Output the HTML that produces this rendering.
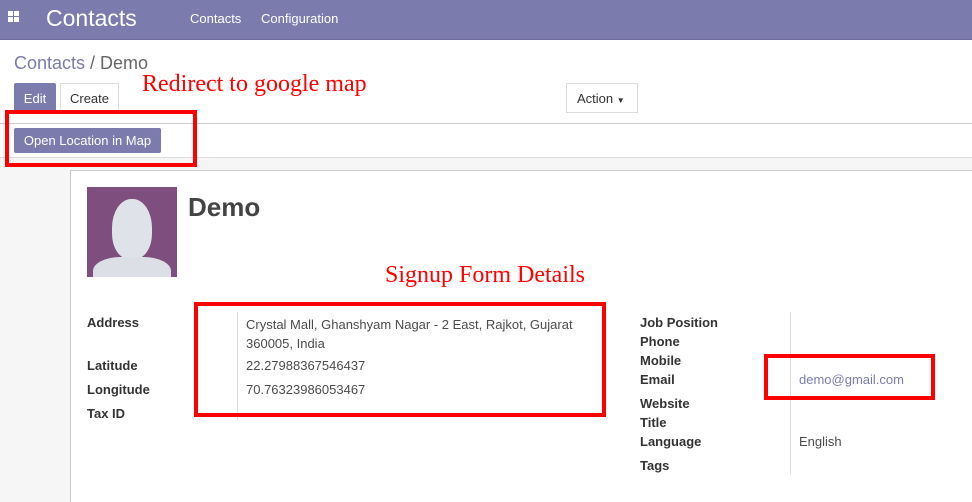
<!DOCTYPE html>
<html><head><style>
*{margin:0;padding:0;box-sizing:border-box}
body{width:972px;height:502px;overflow:hidden;background:#fff;font-family:"Liberation Sans",sans-serif;position:relative;color:#4c4c4c}
.a{position:absolute}
.nav{left:0;top:0;width:972px;height:40px;background:#7c7bad;border-bottom:1px solid #6c6b9a}
.lbl{font-size:13px;font-weight:bold;color:#333}
.val{font-size:13px;color:#4c4c4c}
.red{border:4px solid #f00}
.ann{font-family:"Liberation Serif",serif;color:#f00;font-size:24px}
</style></head><body>
<div class="a nav"></div>
<div class="a" style="left:8px;top:11px;width:12px;height:12px">
<div class="a" style="left:0;top:0;width:5px;height:5px;background:#fff"></div>
<div class="a" style="left:6px;top:0;width:5px;height:5px;background:#fff"></div>
<div class="a" style="left:0;top:6px;width:5px;height:5px;background:#fff"></div>
<div class="a" style="left:6px;top:6px;width:5px;height:5px;background:#fff"></div></div>
<div class="a" style="left:46px;top:5px;font-size:23px;color:#fff">Contacts</div>
<div class="a" style="left:190px;top:11px;font-size:13px;color:#fff">Contacts</div>
<div class="a" style="left:261px;top:11px;font-size:13px;color:#fff">Configuration</div>
<div class="a" style="left:14px;top:53px;font-size:18px;color:#7c7bad">Contacts <span style="color:#666">/ Demo</span></div>
<div class="a" style="left:14px;top:83px;width:42px;height:30px;background:#7c7bad;color:#fff;font-size:13px;text-align:center;line-height:31px;border-radius:2px 2px 0 0">Edit</div>
<div class="a" style="left:60px;top:83px;width:59px;height:30px;border:1px solid #ddd;color:#333;font-size:13px;text-align:center;line-height:30px">Create</div>
<div class="a" style="left:566px;top:83px;width:72px;height:30px;border:1px solid #ddd;color:#333;font-size:13px;line-height:29px;padding-left:10px">Action <span style="font-size:8px">▼</span></div>
<div class="a ann" style="left:142px;top:71px">Redirect to google map</div>
<div class="a" style="left:0;top:123px;width:972px;height:1px;background:#ccc"></div>
<div class="a" style="left:14px;top:128px;width:147px;height:25px;background:#7c7bad;color:#fff;font-size:13px;text-align:center;line-height:25px;border-radius:2px">Open Location in Map</div>
<div class="a" style="left:0;top:157px;width:972px;height:345px;background:#f6f6f6;border-top:1px solid #ddd"></div>
<div class="a" style="left:70px;top:170px;width:902px;height:332px;background:#fff;border:1px solid #ccc;border-right:none;border-bottom:none"></div>
<div class="a red" style="left:5px;top:110px;width:192px;height:57px"></div>
<div class="a" style="left:87px;top:187px;width:90px;height:90px;background:#7e4e7e;overflow:hidden">
<div class="a" style="left:25px;top:12px;width:40px;height:60px;border-radius:48% 48% 42% 42%;background:#dfe2e8"></div>
<div class="a" style="left:6px;top:70px;width:78px;height:40px;border-radius:35% 35% 0 0;background:#dcdfe5"></div></div>
<div class="a" style="left:188px;top:192px;font-size:26px;font-weight:bold;color:#444">Demo</div>
<div class="a ann" style="left:385px;top:262px">Signup Form Details</div>
<div class="a lbl" style="left:87px;top:315px">Address</div>
<div class="a lbl" style="left:87px;top:358px">Latitude</div>
<div class="a lbl" style="left:87px;top:382px">Longitude</div>
<div class="a lbl" style="left:87px;top:406px">Tax ID</div>
<div class="a" style="left:237px;top:312px;width:1px;height:108px;background:#ddd"></div>
<div class="a val" style="left:246px;top:315px;line-height:19px;width:340px">Crystal Mall, Ghanshyam Nagar - 2 East, Rajkot, Gujarat 360005, India</div>
<div class="a val" style="left:246px;top:358px">22.27988367546437</div>
<div class="a val" style="left:246px;top:382px">70.76323986053467</div>
<div class="a red" style="left:194px;top:302px;width:412px;height:115px"></div>
<div class="a lbl" style="left:640px;top:315px">Job Position</div>
<div class="a lbl" style="left:640px;top:334px">Phone</div>
<div class="a lbl" style="left:640px;top:353px">Mobile</div>
<div class="a lbl" style="left:640px;top:372px">Email</div>
<div class="a lbl" style="left:640px;top:396px">Website</div>
<div class="a lbl" style="left:640px;top:415px">Title</div>
<div class="a lbl" style="left:640px;top:434px">Language</div>
<div class="a lbl" style="left:640px;top:458px">Tags</div>
<div class="a" style="left:790px;top:312px;width:1px;height:162px;background:#ddd"></div>
<div class="a val" style="left:799px;top:372px;color:#7c7bad">demo@gmail.com</div>
<div class="a val" style="left:799px;top:434px">English</div>
<div class="a red" style="left:764px;top:354px;width:171px;height:46px"></div>
</body></html>
